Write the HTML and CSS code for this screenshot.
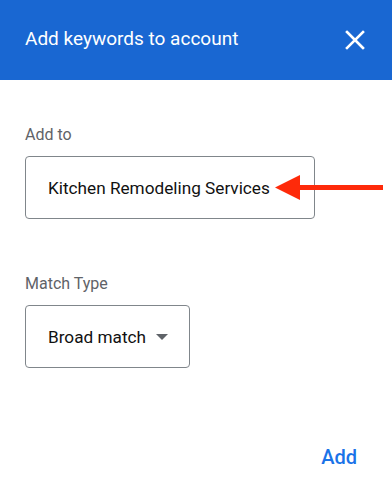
FILE: index.html
```html
<!DOCTYPE html>
<html>
<head>
<meta charset="utf-8">
<link rel="stylesheet" href="styles.css">
</head>
<body>
<div class="dialog">
  <header class="header">
    <div class="title">Add keywords to account</div>
    <svg class="close" width="20" height="20" viewBox="0 0 20 20">
      <path d="M2 2 L18 18 M18 2 L2 18" stroke="#fff" stroke-width="2.6" stroke-linecap="square" fill="none"/>
    </svg>
  </header>
  <main class="content">
    <div class="label first">Add to</div>
    <div class="field-wrap">
      <div class="field wide">Kitchen Remodeling Services</div>
      <svg class="arrow" width="108" height="25" viewBox="0 0 108 25">
        <rect x="22" y="10" width="86" height="5" fill="#fe2a0a"/>
        <polygon points="0,12.5 25,0 25,25" fill="#fe2a0a"/>
      </svg>
    </div>
    <div class="label second">Match Type</div>
    <div class="field narrow">
      <span>Broad match</span>
      <span class="caret"></span>
    </div>
    <div class="actions">
      <span class="add">Add</span>
    </div>
  </main>
</div>
</body>
</html>
```
FILE: styles.css
```css
html, body {
  margin: 0;
  padding: 0;
  background: #fff;
}
body {
  font-family: Roboto, "Liberation Sans", Arial, sans-serif;
  width: 392px;
  height: 496px;
  overflow: hidden;
}
.header {
  height: 80px;
  background: #1967d2;
  display: flex;
  align-items: center;
  justify-content: space-between;
  padding: 0 27px 0 25px;
  box-sizing: border-box;
}
.title {
  color: #fff;
  font-size: 19px;
  line-height: 24px;
  margin-top: -2px;
}
.close {
  display: block;
  margin-top: -1px;
}
.content {
  padding: 0 25px;
}
.label {
  font-size: 16px;
  line-height: 20px;
  color: #5f6368;
  margin-bottom: 11px;
}
.label.first {
  margin-top: 45px;
}
.label.second {
  margin-top: 55px;
}
.field-wrap {
  position: relative;
}
.field {
  box-sizing: border-box;
  height: 63px;
  border: 1px solid #80868b;
  border-radius: 4px;
  display: flex;
  align-items: center;
  padding-left: 22px;
  font-size: 17.2px;
  color: #111;
}
.field.wide {
  width: 290px;
}
.field.narrow {
  width: 165px;
}
.arrow {
  position: absolute;
  left: 250px;
  top: 19px;
  display: block;
}
.caret {
  width: 0;
  height: 0;
  border-left: 6px solid transparent;
  border-right: 6px solid transparent;
  border-top: 6px solid #5f6368;
  margin-left: 10px;
  margin-top: 1px;
}
.actions {
  display: flex;
  justify-content: flex-end;
  margin-top: 77px;
  padding-right: 10px;
}
.add {
  color: #1a73e8;
  font-size: 20px;
  line-height: 24px;
  font-weight: 500;
}
```
